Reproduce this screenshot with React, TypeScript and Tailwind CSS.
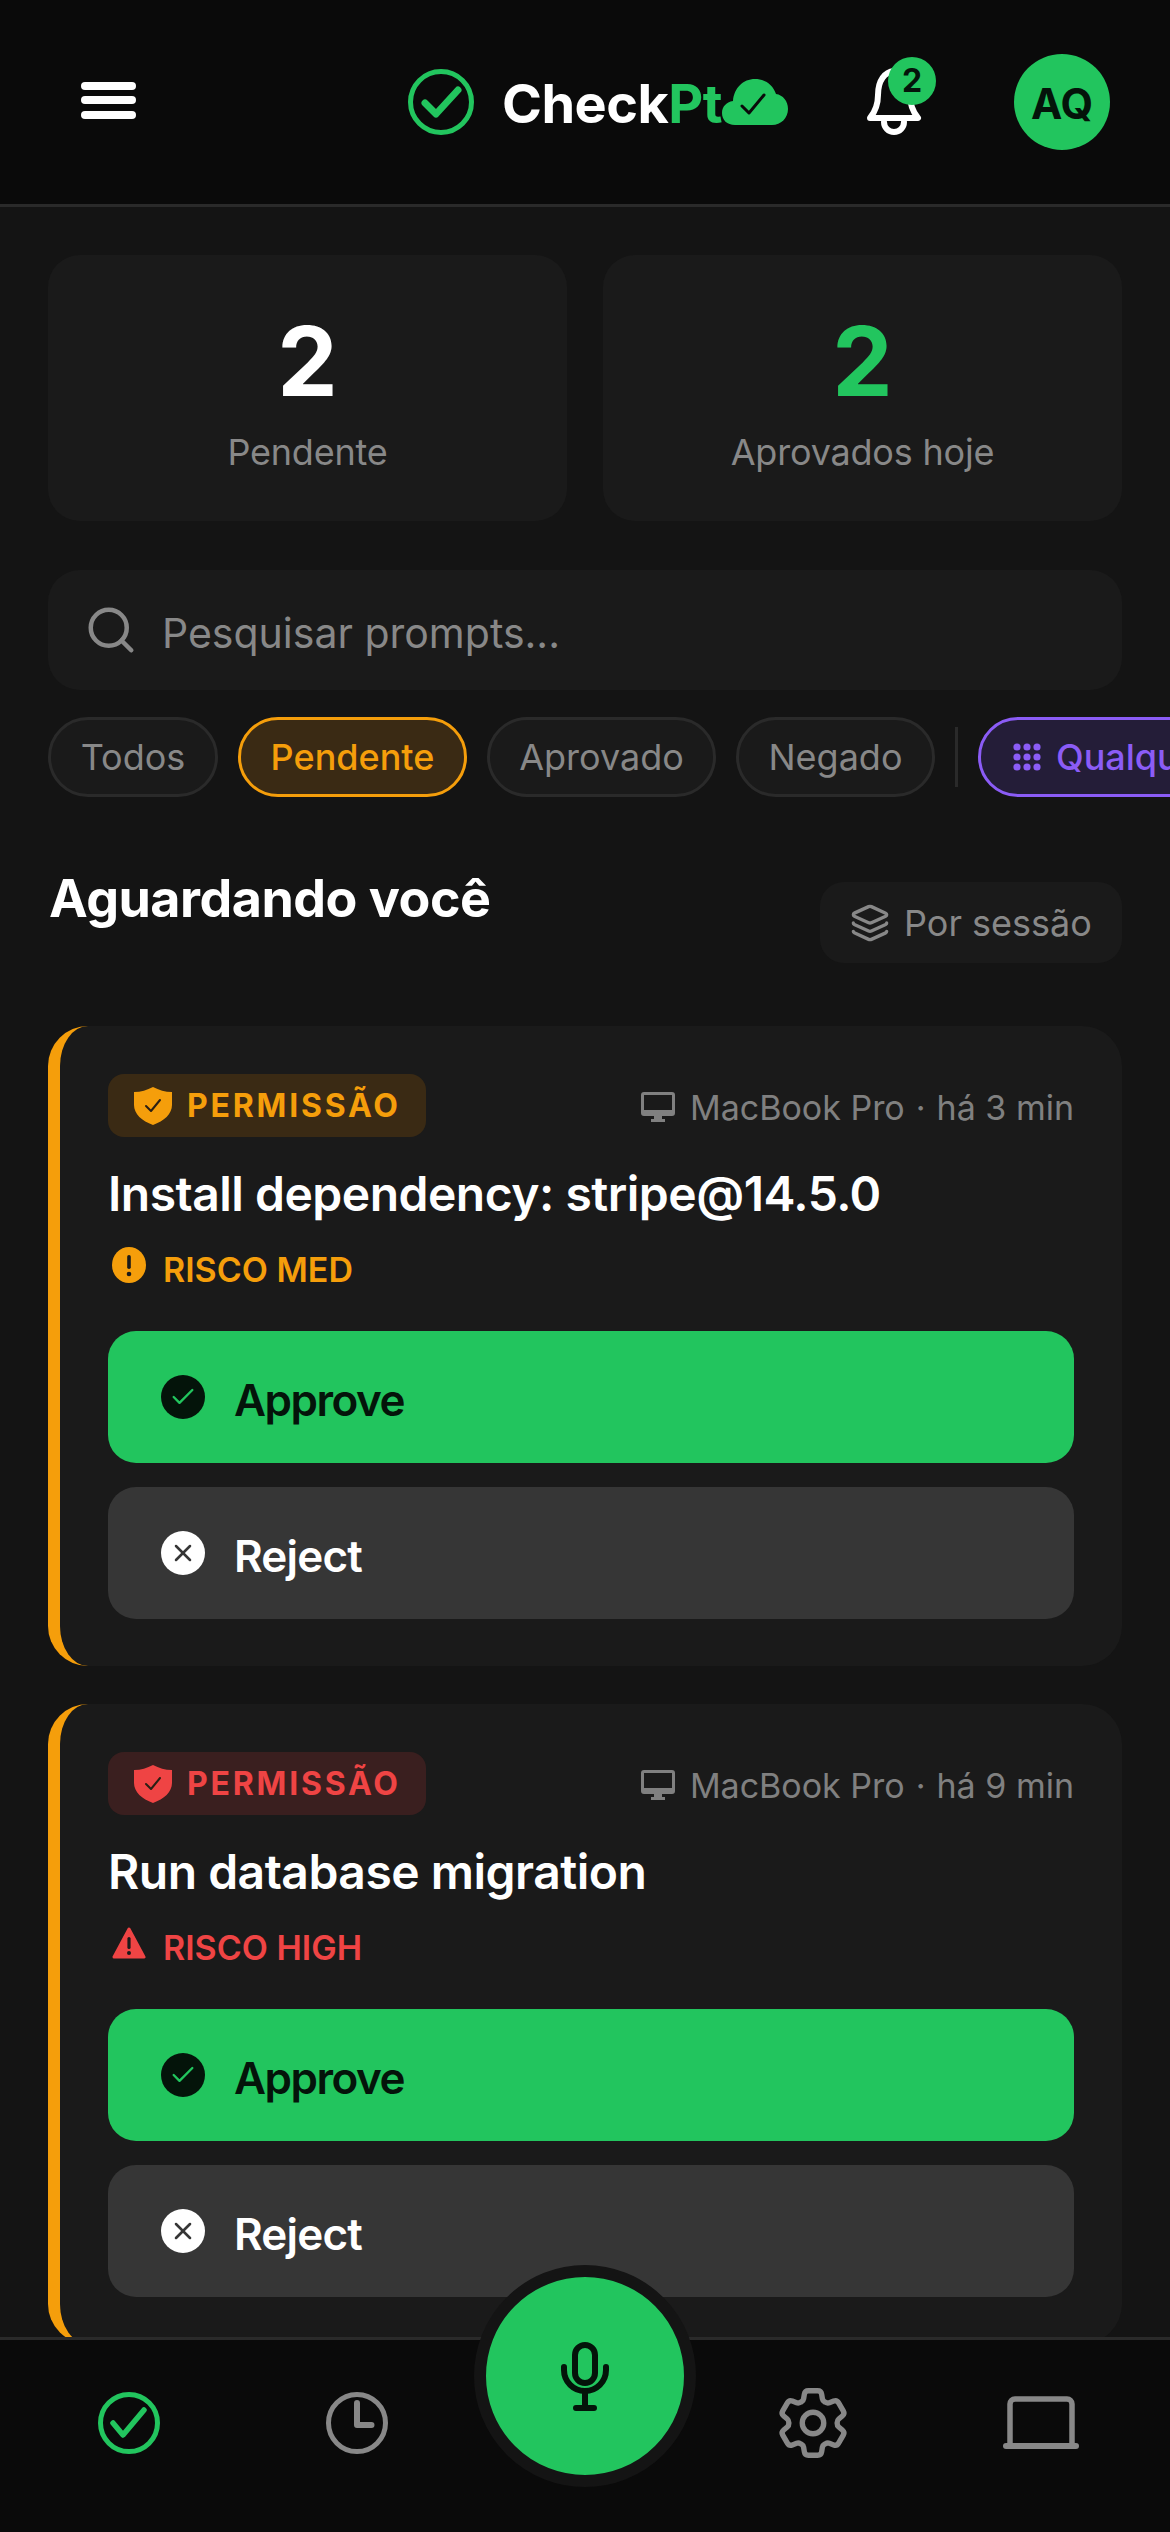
import { Search, Layers, Check, X } from "lucide-react";
import { HiOutlineCog6Tooth } from "react-icons/hi2";

const font = { fontFamily: "Inter, 'Noto Sans', sans-serif" };

function LogoCheck({ className }: { className?: string }) {
  return (
    <svg viewBox="0 0 66 66" fill="none" className={className}>
      <circle cx="33" cy="33" r="30.5" stroke="#22c55e" strokeWidth="5" />
      <path d="M17 34l11 11 22-24" stroke="#22c55e" strokeWidth="7" strokeLinecap="round" strokeLinejoin="round" />
    </svg>
  );
}

function CloudCheck() {
  return (
    <svg viewBox="0 0 66 46" className="w-[66px] h-[46px] shrink-0">
      <path
        d="M13 46C5 46 0 41 0 34c0-6 4-11 11-12C12 9 21 0 33 0c10 0 18 6 21 15 7 1 12 7 12 15 0 9-7 16-16 16z"
        fill="#22c55e"
      />
      <path d="M20 27l7 7 15-18" stroke="#0a0a0a" strokeWidth="3" fill="none" strokeLinecap="round" strokeLinejoin="round" />
    </svg>
  );
}

function BellOutline() {
  return (
    <svg viewBox="0 0 58 70" fill="none" stroke="#ffffff" strokeWidth="6" strokeLinejoin="round" strokeLinecap="round" className="w-[58px] h-[70px]">
      <path d="M5 50C10 44 13 38 13 27 13 12 20 4 29 3c9 1 16 9 16 24 0 11 3 17 8 23z" />
      <path d="M19 54a10 10 0 0 0 20 0" />
    </svg>
  );
}

function ShieldBadge({ tone }: { tone: "amber" | "red" }) {
  const fill = tone === "amber" ? "#f59e0b" : "#ef4444";
  return (
    <svg viewBox="0 0 38 38" className="w-[38px] h-[38px] shrink-0">
      <path d="M19 0c6 3 12 5 19 5v13c0 9-8 16-19 20C8 34 0 27 0 18V5c7 0 13-2 19-5z" fill={fill} />
      <path d="M12 19l5 5 9-11" stroke="#2a1f14" strokeWidth="2" fill="none" strokeLinecap="round" strokeLinejoin="round" />
    </svg>
  );
}

function MonitorFilled() {
  return (
    <svg viewBox="0 0 34 30" className="w-[34px] h-[30px] shrink-0">
      <path
        fillRule="evenodd"
        d="M3 0h28a3 3 0 013 3v18a3 3 0 01-3 3H21v3h3v3H10v-3h3v-3H3a3 3 0 01-3-3V3a3 3 0 013-3zm0 3v15h28V3z"
        fill="#808080"
      />
    </svg>
  );
}

function RiskMed() {
  return (
    <svg viewBox="0 0 34 36" className="w-[34px] h-[36px] shrink-0 ml-[4px] -mt-[8px]">
      <ellipse cx="17" cy="18" rx="17" ry="18" fill="#f59e0b" />
      <rect x="15.2" y="8" width="3.6" height="14" rx="1.8" fill="#1a1a1a" />
      <circle cx="17" cy="27" r="2.3" fill="#1a1a1a" />
    </svg>
  );
}

function RiskHigh() {
  return (
    <svg viewBox="0 0 34 32" className="w-[34px] h-[32px] shrink-0 ml-[4px] -mt-[8px]">
      <path d="M17 2L32 30H2z" fill="#ef4444" stroke="#ef4444" strokeWidth="3" strokeLinejoin="round" />
      <rect x="15.4" y="10" width="3.2" height="12" rx="1.6" fill="#1a1a1a" />
      <circle cx="17" cy="26" r="2" fill="#1a1a1a" />
    </svg>
  );
}

function Stat({ value, label, green }: { value: string; label: string; green?: boolean }) {
  return (
    <div className="flex-1 h-[266px] rounded-[32px] bg-[#1a1a1a] flex flex-col items-center pt-[50px]">
      <div className={`text-[96px] leading-[112px] font-bold ${green ? "text-[#22c55e]" : "text-white"}`}>{value}</div>
      <div className="mt-[13px] text-[36px] leading-[44px] tracking-[-0.2px] text-[#888888]">{label}</div>
    </div>
  );
}

function Chip({ label, width }: { label: string; width: string }) {
  return (
    <div className={`h-[80px] shrink-0 ${width} rounded-full border-[3px] border-[#2a2a2a] bg-[#1a1a1a] flex items-center justify-center text-[36px] text-[#888888]`}>
      {label}
    </div>
  );
}

function PromptCard({
  tone,
  title,
  time,
  risk,
}: {
  tone: "amber" | "red";
  title: string;
  time: string;
  risk: string;
}) {
  const amber = tone === "amber";
  return (
    <div className="shrink-0 h-[640px] rounded-[40px] border-l-[12px] border-[#f59e0b] bg-[#1a1a1a] pt-[48px] pl-[48px] pr-[48px]">
      <div className="flex items-center justify-between h-[63px]">
        <div
          className={`h-[63px] w-[318px] rounded-[16px] flex items-center pl-[26px] gap-[15px] ${
            amber ? "bg-[#3a2a14]" : "bg-[#3a1f1f]"
          }`}
        >
          <ShieldBadge tone={tone} />
          <span className={`text-[32px] font-bold tracking-[2.8px] ${amber ? "text-[#f59e0b]" : "text-[#ef4444]"}`}>
            PERMISSÃO
          </span>
        </div>
        <div className="flex items-center text-[34px] text-[#808080] pt-[3px]">
          <MonitorFilled />
          <span className="ml-[15px]">MacBook Pro</span>
          <span className="mx-[11px]">·</span>
          <span>{time}</span>
        </div>
      </div>
      <div className="mt-[27px] text-[48px] leading-[60px] tracking-[-0.5px] font-semibold text-white">{title}</div>
      <div className="mt-[23px] h-[44px] flex items-center gap-[17px]">
        {amber ? <RiskMed /> : <RiskHigh />}
        <span className={`text-[34px] font-semibold ${amber ? "text-[#f59e0b]" : "text-[#ef4444]"}`}>{risk}</span>
      </div>
      <div className="mt-[40px] h-[132px] rounded-[28px] bg-[#22c55e] flex items-center pl-[53px] gap-[29px]">
        <span className="w-[44px] h-[44px] rounded-full bg-[#04140a] flex items-center justify-center">
          <Check size={28} strokeWidth={2} color="#22c55e" />
        </span>
        <span className="text-[44px] font-semibold tracking-[-1.5px] pt-[5px] text-[#04140a]">Approve</span>
      </div>
      <div className="mt-[24px] h-[132px] rounded-[28px] bg-[#363636] flex items-center pl-[53px] gap-[29px]">
        <span className="w-[44px] h-[44px] rounded-full bg-white flex items-center justify-center">
          <X size={28} strokeWidth={2.2} color="#363636" />
        </span>
        <span className="text-[44px] font-semibold tracking-[-0.8px] pt-[5px] text-white">Reject</span>
      </div>
    </div>
  );
}

export default function App() {
  return (
    <div style={font} className="relative w-[1170px] h-[2532px] overflow-hidden bg-[#141414] flex flex-col">
      <header className="h-[207px] shrink-0 bg-[#0a0a0a] border-b-[3px] border-[#2a2a2a] flex items-center pl-[81px] pr-[60px]">
        <div className="w-[55px] flex flex-col gap-[6.5px] mt-[-4px]">
          <span className="h-[8px] rounded-full bg-white" />
          <span className="h-[8px] rounded-full bg-white" />
          <span className="h-[8px] rounded-full bg-white" />
        </div>
        <div className="ml-[272px] w-[379px] shrink-0 flex items-center">
          <LogoCheck className="w-[66px] h-[66px] shrink-0" />
          <div className="ml-[28px] text-[54px] font-bold leading-none tracking-[-0.5px] pt-[3px]">
            <span className="text-white">Check</span>
            <span className="text-[#22c55e]">Pt</span>
          </div>
          <CloudCheck />
        </div>
        <div className="relative ml-[78px] mt-[2px]">
          <BellOutline />
          <span className="absolute left-[23px] top-[-11px] w-[48px] h-[48px] rounded-full bg-[#22c55e] text-[#04140a] text-[32px] font-bold flex items-center justify-center">
            2
          </span>
        </div>
        <div className="ml-auto w-[96px] h-[96px] rounded-full bg-[#22c55e] text-[#04140a] text-[42px] font-bold pt-[3px] flex items-center justify-center">
          AQ
        </div>
      </header>

      <main className="flex-1 min-h-0 overflow-hidden flex flex-col px-[48px] pt-[48px]">
        <div className="flex gap-[36px] shrink-0">
          <Stat value="2" label="Pendente" />
          <Stat value="2" label="Aprovados hoje" green />
        </div>

        <div className="mt-[49px] h-[120px] shrink-0 rounded-[32px] bg-[#1a1a1a] flex items-center pl-[36px] gap-[24px]">
          <Search size={54} strokeWidth={2} color="#888888" />
          <span className="text-[41px] text-[#888888] pt-[7px]">Pesquisar prompts...</span>
        </div>

        <div className="mt-[27px] h-[80px] shrink-0 flex items-center gap-[20px] w-[1122px] overflow-hidden">
          <Chip label="Todos" width="w-[170px]" />
          <div className="h-[80px] w-[229px] shrink-0 rounded-full border-[3px] border-[#f59e0b] bg-[#3a2a14] flex items-center justify-center text-[36px] font-medium text-[#f59e0b]">
            Pendente
          </div>
          <Chip label="Aprovado" width="w-[229px]" />
          <Chip label="Negado" width="w-[199px]" />
          <div className="w-[3px] h-[60px] shrink-0 bg-[#2a2a2a]" />
          <div className="h-[80px] shrink-0 px-[32px] rounded-full border-[3px] border-[#8b5cf6] bg-[#241d38] flex items-center gap-[15px] text-[36px] text-[#8b5cf6] font-medium">
            <svg viewBox="0 0 28 28" fill="#8b5cf6" className="w-[28px] h-[28px] shrink-0">
              <circle cx="4" cy="4" r="3.6" />
              <circle cx="14" cy="4" r="3.6" />
              <circle cx="24" cy="4" r="3.6" />
              <circle cx="4" cy="14" r="3.6" />
              <circle cx="14" cy="14" r="3.6" />
              <circle cx="24" cy="14" r="3.6" />
              <circle cx="4" cy="24" r="3.6" />
              <circle cx="14" cy="24" r="3.6" />
              <circle cx="24" cy="24" r="3.6" />
            </svg>
            Qualquer
          </div>
        </div>

        <div className="mt-[85px] h-[81px] shrink-0 flex justify-between">
          <div className="text-[52px] leading-[62px] tracking-[-0.5px] font-bold text-white mt-[-14px] ml-[1px]">
            Aguardando você
          </div>
          <div className="h-[81px] w-[302px] rounded-[24px] bg-[#1a1a1a] flex items-center pl-[30px] gap-[14px] text-[36px] text-[#888888]">
            <Layers size={40} strokeWidth={2} />
            Por sessão
          </div>
        </div>

        <div className="mt-[63px] flex flex-col gap-[38px]">
          <PromptCard tone="amber" title="Install dependency: stripe@14.5.0" time="há 3 min" risk="RISCO MED" />
          <PromptCard tone="red" title="Run database migration" time="há 9 min" risk="RISCO HIGH" />
        </div>
      </main>

      <nav className="h-[195px] shrink-0 bg-[#0a0a0a] border-t-[3px] border-[#2a2a2a] pt-[52px] px-[15px]">
        <div className="h-[62px] grid grid-cols-5 grid-rows-[62px]">
          <div className="flex items-center justify-center">
            <svg viewBox="0 0 62 62" fill="none" className="w-[62px] h-[62px]">
              <circle cx="31" cy="31" r="28.5" stroke="#22c55e" strokeWidth="5" />
              <path d="M15 31l10 12 21-25" stroke="#22c55e" strokeWidth="5.5" strokeLinecap="round" strokeLinejoin="round" />
            </svg>
          </div>
          <div className="flex items-center justify-center">
            <svg viewBox="0 0 62 62" fill="none" className="w-[62px] h-[62px]">
              <circle cx="31" cy="31" r="28.5" stroke="#888888" strokeWidth="5" />
              <path d="M31 11v22h14.5" stroke="#888888" strokeWidth="6" strokeLinecap="round" strokeLinejoin="round" />
            </svg>
          </div>
          <div />
          <div className="flex items-center justify-center">
            <HiOutlineCog6Tooth size={86} color="#888888" className="shrink-0" />
          </div>
          <div className="flex items-center justify-center">
            <svg viewBox="0 0 76 54" fill="none" stroke="#888888" strokeLinecap="round" strokeLinejoin="round" className="w-[76px] h-[54px]">
              <path d="M7 50V8a5 5 0 0 1 5-5h52a5 5 0 0 1 5 5v42" strokeWidth="5.5" />
              <path d="M3 50h70" strokeWidth="6" />
            </svg>
          </div>
        </div>
      </nav>

      {/* Floating microphone action, centred over the tab bar */}
      <button className="absolute left-[474px] top-[2265px] w-[222px] h-[222px] rounded-full border-[12px] border-[#141414] bg-[#22c55e] flex items-center justify-center">
        <svg viewBox="0 0 50 72" fill="none" stroke="#04140a" strokeWidth="6" strokeLinecap="round" className="w-[50px] h-[72px]">
          <rect x="15" y="5" width="20" height="38" rx="10" />
          <path d="M4 27v3a21 21 0 0 0 42 0v-3" />
          <path d="M25 51v17M16 68h18" />
        </svg>
      </button>
    </div>
  );
}
